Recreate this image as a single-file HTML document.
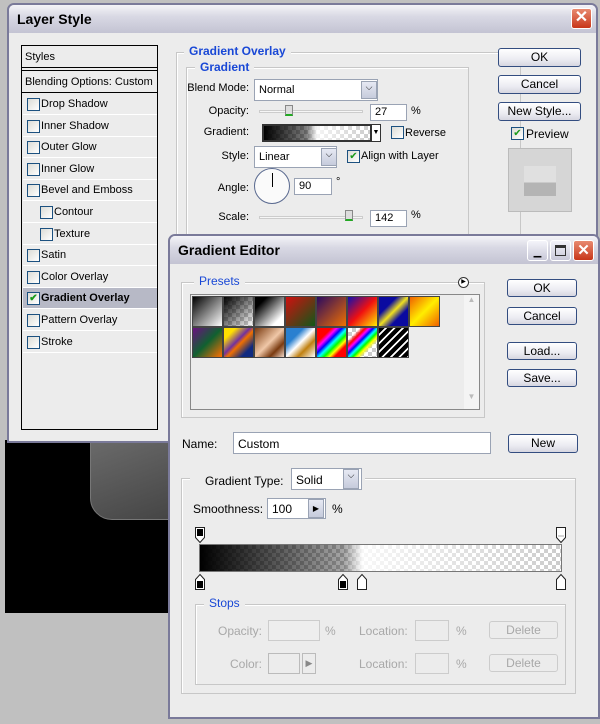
<!DOCTYPE html><html><head><style>
*{box-sizing:border-box;margin:0;padding:0}
body{width:600px;height:724px;background:#c0c0c0;position:relative;overflow:hidden;font-family:"Liberation Sans",sans-serif;font-size:11px;color:#000}
.a{position:absolute}
.win{position:absolute;background:#ececec;border:2px solid #7a7a9a;border-radius:7px 7px 0 0}
.tb{position:absolute;left:0;right:0;top:0;height:28px;background:linear-gradient(#f4f4f8,#d9d9e4 40%,#c3c3d3);border-radius:5px 5px 0 0;font-weight:bold;font-size:14px;padding:6px 0 0 8px}
.btn{position:absolute;border:1px solid #334d80;border-radius:3px;background:linear-gradient(#fff,#ececf2 60%,#d6d6e0);text-align:center;font-size:12px;line-height:17px}
.inp{position:absolute;background:#fff;border:1px solid #9aa3b4;padding:1px 4px;font-size:11px}
.cb{position:absolute;width:13px;height:13px;border:1px solid #1c5180;background:linear-gradient(135deg,#dcdcd6,#fff)}
.row{position:absolute;left:1px;width:134px;height:21px;border-bottom:1px solid #fff;padding:4px 0 0 18px}
.row .cb{left:4px;top:4px}
.lbl{position:absolute;text-align:right}
.grp{position:absolute;border:1px solid #c7c7c7;box-shadow:1px 1px 0 #fff inset}
.gt{position:absolute;background:#ececec;color:#1948d6;padding:0 5px;font-size:12px}
.dd{position:absolute;width:16px;background:linear-gradient(#e6e9f3,#c6cbdc);border:1px solid #9aa3b4;font-size:9px;text-align:center}
.ck{background:repeating-conic-gradient(#ccc 0 25%,#fff 0 50%) 0 0/8px 8px}
.sw{position:absolute;width:31px;height:31px;border:1px solid #444}
.dis{color:#a8a8a8}
svg{position:absolute}
</style></head><body>
<div class="a" style="left:5px;top:440px;width:165px;height:173px;background:#000"></div>
<div class="a" style="left:90px;top:440px;width:90px;height:80px;background:linear-gradient(160deg,#6a6a6a,#444);border-radius:0 0 0 22px;border:1px solid #777"></div>

<div class="win" style="left:7px;top:3px;width:591px;height:440px">
<div class="tb">Layer Style</div>
<div class="a" style="right:4px;top:3px;width:21px;height:21px;background:linear-gradient(#e88a70,#c8361a);border:1px solid #fff;border-radius:3px;color:#fff;font-size:16px;text-align:center;line-height:18px;font-weight:bold">✕</div>
<div class="a" style="left:12px;top:40px;width:137px;height:385px;border:1px solid #000;background:#ececec">
<div class="a" style="left:0;top:0;width:135px;height:22px;border-bottom:1px solid #000;padding:5px 3px">Styles</div>
<div class="a" style="left:0;top:24px;width:135px;height:23px;border-top:1px solid #000;border-bottom:1px solid #000;padding:5px 3px;white-space:nowrap">Blending Options: Custom</div>
<div class="row" style="top:48px"><div class="cb"></div>Drop Shadow</div>
<div class="row" style="top:70px"><div class="cb"></div>Inner Shadow</div>
<div class="row" style="top:91px"><div class="cb"></div>Outer Glow</div>
<div class="row" style="top:113px"><div class="cb"></div>Inner Glow</div>
<div class="row" style="top:134px"><div class="cb"></div>Bevel and Emboss</div>
<div class="row" style="top:156px;padding-left:31px"><div class="cb" style="left:17px"></div>Contour</div>
<div class="row" style="top:178px;padding-left:31px"><div class="cb" style="left:17px"></div>Texture</div>
<div class="row" style="top:199px"><div class="cb"></div>Satin</div>
<div class="row" style="top:221px"><div class="cb"></div>Color Overlay</div>
<div class="row" style="top:242px;background:#b7b9c6;font-weight:bold"><div class="cb" style="color:#1a9a1a;font-size:10px;line-height:11px;text-align:center">✔</div>Gradient Overlay</div>
<div class="row" style="top:264px"><div class="cb"></div>Pattern Overlay</div>
<div class="row" style="top:286px"><div class="cb"></div>Stroke</div>
</div>
<div class="grp" style="left:167px;top:47px;width:345px;height:200px"></div>
<div class="gt" style="left:175px;top:39px;font-weight:bold">Gradient Overlay</div>
<div class="grp" style="left:177px;top:62px;width:283px;height:180px"></div>
<div class="gt" style="left:186px;top:55px;font-weight:bold">Gradient</div>
<div class="lbl" style="left:160px;width:80px;top:77px">Blend Mode:</div>
<div class="inp" style="left:245px;top:74px;width:124px;height:22px;padding-top:4px">Normal</div>
<div class="dd" style="left:352px;top:76px;height:18px">&#9013;</div>
<div class="lbl" style="left:160px;width:80px;top:100px">Opacity:</div>
<div class="a" style="left:250px;top:105px;width:104px;height:3px;border:1px solid #ccc;background:#f6f6f6"></div>
<div class="a" style="left:276px;top:100px;width:8px;height:11px;background:#ddd;border:1px solid #888;border-bottom:2px solid #2a2"></div>
<div class="inp" style="left:361px;top:99px;width:37px;height:17px">27</div><div class="a" style="left:402px;top:100px">%</div>
<div class="lbl" style="left:160px;width:80px;top:121px">Gradient:</div>
<div class="a ck" style="left:253px;top:119px;width:110px;height:18px;border:2px solid #333"><div style="width:100%;height:100%;background:linear-gradient(90deg,#000,rgba(0,0,0,.5) 40%,rgba(255,255,255,.8) 50%,rgba(255,255,255,0))"></div></div>
<div class="a" style="left:362px;top:119px;width:10px;height:18px;border:1px solid #333;background:#fff;font-size:7px;text-align:center;line-height:16px">▼</div>
<div class="cb" style="left:382px;top:121px"></div><div class="a" style="left:396px;top:122px">Reverse</div>
<div class="lbl" style="left:160px;width:80px;top:145px">Style:</div>
<div class="inp" style="left:245px;top:141px;width:83px;height:22px;padding-top:4px">Linear</div>
<div class="dd" style="left:312px;top:143px;height:18px">&#9013;</div>
<div class="cb" style="left:338px;top:145px;color:#1a9a1a;font-size:10px;line-height:11px;text-align:center">✔</div><div class="a" style="left:352px;top:145px">Align with Layer</div>
<div class="lbl" style="left:160px;width:80px;top:177px">Angle:</div>
<div class="a" style="left:245px;top:163px;width:36px;height:36px;border-radius:50%;border:1px solid #5a6a90;background:#fafafa"></div>
<div class="a" style="left:263px;top:168px;width:1px;height:14px;background:#000"></div>
<div class="inp" style="left:285px;top:173px;width:38px;height:17px">90</div><div class="a" style="left:327px;top:171px">°</div>
<div class="lbl" style="left:160px;width:80px;top:206px">Scale:</div>
<div class="a" style="left:250px;top:211px;width:104px;height:3px;border:1px solid #ccc;background:#f6f6f6"></div>
<div class="a" style="left:336px;top:205px;width:8px;height:11px;background:#ddd;border:1px solid #888;border-bottom:2px solid #2a2"></div>
<div class="inp" style="left:361px;top:205px;width:37px;height:17px">142</div><div class="a" style="left:402px;top:204px">%</div>
<div class="btn" style="left:489px;top:43px;width:83px;height:19px">OK</div>
<div class="btn" style="left:489px;top:70px;width:83px;height:19px">Cancel</div>
<div class="btn" style="left:489px;top:97px;width:83px;height:19px">New Style...</div>
<div class="cb" style="left:502px;top:122px;color:#1a9a1a;font-size:10px;line-height:11px;text-align:center">✔</div><div class="a" style="left:517px;top:122px;font-size:12px">Preview</div>
<div class="a" style="left:499px;top:143px;width:64px;height:64px;background:#d6d6d6;border:1px solid #bbb"><div class="a" style="left:15px;top:17px;width:32px;height:30px;background:linear-gradient(#e0e0e0 55%,#b4b4b4 55%)"></div></div>
</div>

<div class="win" style="left:168px;top:234px;width:432px;height:485px">
<div class="tb">Gradient Editor</div>
<div class="a" style="right:50px;top:4px;width:21px;height:21px;border:1px solid #fff;border-radius:3px;background:linear-gradient(#f4f4fa,#c8c8d8);text-align:center;font-size:10px;line-height:24px">▁</div>
<div class="a" style="right:27px;top:4px;width:21px;height:21px;border:1px solid #fff;border-radius:3px;background:linear-gradient(#f4f4fa,#c8c8d8)"><div class="a" style="left:4px;top:4px;width:11px;height:11px;border:1px solid #333;border-top-width:3px"></div></div>
<div class="a" style="right:4px;top:4px;width:21px;height:21px;background:linear-gradient(#e88a70,#c8361a);border:1px solid #fff;border-radius:3px;color:#fff;font-size:15px;text-align:center;line-height:19px;font-weight:bold">✕</div>
<div class="grp" style="left:11px;top:46px;width:304px;height:136px"></div>
<div class="gt" style="left:24px;top:38px">Presets</div>
<div class="a" style="left:288px;top:41px;width:11px;height:11px;border:1px solid #333;border-radius:50%;font-size:6px;text-align:center;line-height:9px;background:#fff">▶</div>
<div class="a" style="left:20px;top:58px;width:290px;height:116px;border:1px solid #888;background:#ececec"></div>
<div class="a" style="left:294px;top:59px;width:15px;height:114px;background:#f4f4f4"><div style="color:#bbb;font-size:8px;text-align:center">▲</div><div style="color:#bbb;font-size:8px;text-align:center;margin-top:88px">▼</div></div>
<div class="sw" style="left:22px;top:60px;background:linear-gradient(135deg,#000,#fff)"></div>
<div class="sw ck" style="left:53px;top:60px"><div style="height:100%;background:linear-gradient(135deg,#000,transparent)"></div></div>
<div class="sw" style="left:84px;top:60px;background:linear-gradient(135deg,#000 20%,#fff 80%)"></div>
<div class="sw" style="left:115px;top:60px;background:linear-gradient(135deg,#d01010,#105818)"></div>
<div class="sw" style="left:146px;top:60px;background:linear-gradient(135deg,#2a0a60,#f07000)"></div>
<div class="sw" style="left:177px;top:60px;background:linear-gradient(135deg,#1010b0,#f01010,#ffee00)"></div>
<div class="sw" style="left:208px;top:60px;background:linear-gradient(135deg,#0a0aa0 30%,#f0e020 50%,#0a0aa0 70%)"></div>
<div class="sw" style="left:239px;top:60px;background:linear-gradient(135deg,#f06000,#ffee00 50%,#f06000)"></div>
<div class="sw" style="left:22px;top:91px;background:linear-gradient(135deg,#6a1080,#106030 50%,#ff7000)"></div>
<div class="sw" style="left:53px;top:91px;background:linear-gradient(135deg,#ffe000 20%,#7030a0 45%,#f07000 55%,#102a80 80%)"></div>
<div class="sw" style="left:84px;top:91px;background:linear-gradient(135deg,#7a3a10,#f0c8a8 50%,#7a3a10 75%,#f0d8c8)"></div>
<div class="sw" style="left:115px;top:91px;background:linear-gradient(135deg,#2a80d0 30%,#fff 50%,#c08010 70%,#fff)"></div>
<div class="sw" style="left:146px;top:91px;background:linear-gradient(135deg,#f00 25%,#f0f,#00f,#0ff,#0f0,#ff0,#f00 80%)"></div>
<div class="sw ck" style="left:177px;top:91px"><div style="height:100%;background:linear-gradient(135deg,transparent 20%,#f00 30%,#f0f,#00f,#0ff,#0f0,#ff0 65%,transparent 75%)"></div></div>
<div class="sw ck" style="left:208px;top:91px"><div style="height:100%;background:repeating-linear-gradient(135deg,#000 0 4px,#fff 4px 6px)"></div></div>
<div class="btn" style="left:337px;top:43px;width:70px;height:18px">OK</div>
<div class="btn" style="left:337px;top:71px;width:70px;height:18px">Cancel</div>
<div class="btn" style="left:337px;top:106px;width:70px;height:18px">Load...</div>
<div class="btn" style="left:337px;top:133px;width:70px;height:18px">Save...</div>
<div class="a" style="left:12px;top:201px;font-size:12px">Name:</div>
<div class="inp" style="left:63px;top:196px;width:258px;height:22px;padding-top:4px;font-size:12px">Custom</div>
<div class="btn" style="left:338px;top:198px;width:70px;height:19px">New</div>
<div class="grp" style="left:11px;top:242px;width:395px;height:216px"></div>
<div class="a" style="left:20px;top:234px;background:#ececec;width:175px;height:18px"></div>
<div class="a" style="left:35px;top:238px;font-size:12px">Gradient Type:</div>
<div class="inp" style="left:121px;top:232px;width:71px;height:22px;padding-top:4px;font-size:12px">Solid</div>
<div class="dd" style="left:173px;top:233px;height:20px">&#9013;</div>
<div class="a" style="left:23px;top:266px;font-size:12px">Smoothness:</div>
<div class="inp" style="left:97px;top:262px;width:59px;height:21px;padding-top:3px;font-size:12px">100</div>
<div class="dd" style="left:138px;top:263px;height:19px;font-size:8px;line-height:17px">▶</div>
<div class="a" style="left:162px;top:266px;font-size:12px">%</div>
<div class="a ck" style="left:29px;top:308px;width:363px;height:28px;border:1px solid #777"><div style="height:100%;background:linear-gradient(90deg,#000,rgba(0,0,0,.35) 40%,rgba(255,255,255,.85) 45%,rgba(255,255,255,0))"></div></div>
<svg style="left:24px;top:290px" width="12" height="18"><path d="M1.5 1.5h9v10l-4.5 5-4.5-5z" fill="#fff" stroke="#222"/><rect x="3" y="3" width="6" height="7" fill="#000"/></svg>
<svg style="left:385px;top:290px" width="12" height="18"><path d="M1.5 1.5h9v10l-4.5 5-4.5-5z" fill="#fff" stroke="#222"/><path d="M3 10h6" stroke="#aaa"/></svg>
<svg style="left:24px;top:337px" width="12" height="18"><path d="M1.5 16.5h9v-10l-4.5-5-4.5 5z" fill="#fff" stroke="#222"/><rect x="3" y="8" width="6" height="7" fill="#000"/></svg>
<svg style="left:167px;top:337px" width="12" height="18"><path d="M1.5 16.5h9v-10l-4.5-5-4.5 5z" fill="#fff" stroke="#222"/><rect x="3" y="8" width="6" height="7" fill="#000"/></svg>
<svg style="left:186px;top:337px" width="12" height="18"><path d="M1.5 16.5h9v-10l-4.5-5-4.5 5z" fill="#fff" stroke="#222"/></svg>
<svg style="left:385px;top:337px" width="12" height="18"><path d="M1.5 16.5h9v-10l-4.5-5-4.5 5z" fill="#fff" stroke="#222"/></svg>
<div class="grp" style="left:25px;top:368px;width:371px;height:81px"></div>
<div class="gt" style="left:34px;top:360px">Stops</div>
<div class="a dis" style="left:48px;top:388px;font-size:12px">Opacity:</div>
<div class="a" style="left:98px;top:384px;width:52px;height:21px;border:1px solid #ccc;background:#eee"></div>
<div class="a dis" style="left:155px;top:388px;font-size:12px">%</div>
<div class="a dis" style="left:189px;top:388px;font-size:12px">Location:</div>
<div class="a" style="left:245px;top:384px;width:34px;height:21px;border:1px solid #ccc"></div>
<div class="a dis" style="left:286px;top:388px;font-size:12px">%</div>
<div class="a dis" style="left:319px;top:385px;width:69px;height:18px;border:1px solid #ccc;border-radius:3px;text-align:center;line-height:16px;font-size:12px">Delete</div>
<div class="a dis" style="left:60px;top:421px;font-size:12px">Color:</div>
<div class="a" style="left:98px;top:417px;width:32px;height:21px;border:1px solid #bbb"></div>
<div class="a" style="left:132px;top:417px;width:14px;height:21px;border:1px solid #bbb;color:#888;font-size:9px;text-align:center;line-height:19px">▶</div>
<div class="a dis" style="left:189px;top:421px;font-size:12px">Location:</div>
<div class="a" style="left:245px;top:417px;width:34px;height:21px;border:1px solid #ccc"></div>
<div class="a dis" style="left:286px;top:421px;font-size:12px">%</div>
<div class="a dis" style="left:319px;top:418px;width:69px;height:18px;border:1px solid #ccc;border-radius:3px;text-align:center;line-height:16px;font-size:12px">Delete</div>
</div>
</body></html>
